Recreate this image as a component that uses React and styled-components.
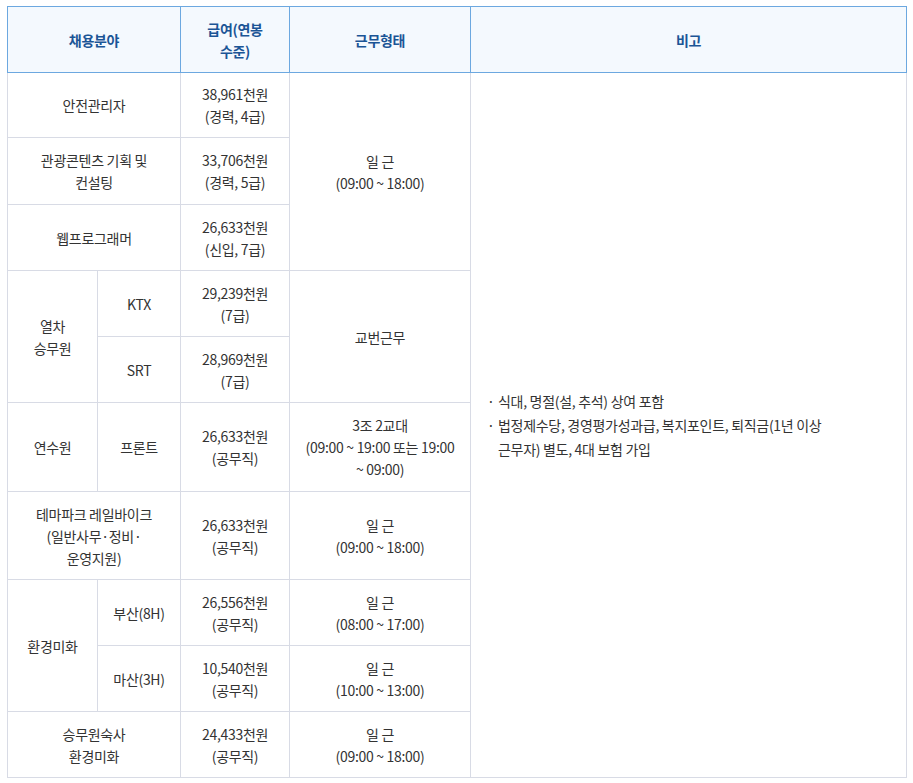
import React from 'react'
import styled, { createGlobalStyle } from 'styled-components'

const GlobalStyle = createGlobalStyle`
	body {
		margin: 0;
		background: #fff;
		font-family: 'Noto Sans CJK KR', 'Noto Sans', sans-serif;
	}
`

const jobs = [
	{ name: '안전관리자', pay: ['38,961천원', '(경력, 4급)'], h: 65 },
	{ name: ['관광콘텐츠 기획 및', '컨설팅'], pay: ['33,706천원', '(경력, 5급)'], h: 67 },
	{ name: '웹프로그래머', pay: ['26,633천원', '(신입, 7급)'], h: 66 },
]

const remarks = [
	'식대, 명절(설, 추석) 상여 포함',
	'법정제수당, 경영평가성과급, 복지포인트, 퇴직금(1년 이상 근무자) 별도, 4대 보험 가입',
]

const Lines = ({ lines }) =>
	[].concat(lines).map((l, i) => (
		<React.Fragment key={i}>
			{i > 0 && <br />}
			{l}
		</React.Fragment>
	))

const App = () => (
	<Page>
		<GlobalStyle />
		<Table>
			<colgroup>
				<col style={{ width: 90 }} />
				<col style={{ width: 83 }} />
				<col style={{ width: 109 }} />
				<col style={{ width: 181 }} />
				<col />
			</colgroup>
			<thead>
				<tr>
					<Th colSpan={2}>채용분야</Th>
					<Th>
						급여(연봉
						<br />
						수준)
					</Th>
					<Th>근무형태</Th>
					<Th>비고</Th>
				</tr>
			</thead>
			<tbody>
				{jobs.map((j, i) => (
					<Row key={i} $h={j.h}>
						<Td colSpan={2}>
							<Lines lines={j.name} />
						</Td>
						<Td>
							<Lines lines={j.pay} />
						</Td>
						{i === 0 && (
							<>
								<Td rowSpan={3}>
									일 근<br />
									(09:00 ~ 18:00)
								</Td>
								<Remarks rowSpan={10}>
									<RemarkList>
										{remarks.map(r => (
											<li key={r}>{r}</li>
										))}
									</RemarkList>
								</Remarks>
							</>
						)}
					</Row>
				))}
				<Row $h={66}>
					<Td rowSpan={2}>
						열차
						<br />
						승무원
					</Td>
					<Td>KTX</Td>
					<Td>
						29,239천원
						<br />
						(7급)
					</Td>
					<Td rowSpan={2}>교번근무</Td>
				</Row>
				<Row $h={66}>
					<Td>SRT</Td>
					<Td>
						28,969천원
						<br />
						(7급)
					</Td>
				</Row>
				<Row $h={89}>
					<Td>연수원</Td>
					<Td>프론트</Td>
					<Td>
						26,633천원
						<br />
						(공무직)
					</Td>
					<Td>
						3조 2교대
						<br />
						(09:00 ~ 19:00 또는 19:00
						<br />~ 09:00)
					</Td>
				</Row>
				<Row $h={88}>
					<Td colSpan={2}>
						테마파크 레일바이크
						<br />
						(일반사무·정비·
						<br />
						운영지원)
					</Td>
					<Td>
						26,633천원
						<br />
						(공무직)
					</Td>
					<Td>
						일 근<br />
						(09:00 ~ 18:00)
					</Td>
				</Row>
				<Row $h={66}>
					<Td rowSpan={2}>환경미화</Td>
					<Td>부산(8H)</Td>
					<Td>
						26,556천원
						<br />
						(공무직)
					</Td>
					<Td>
						일 근<br />
						(08:00 ~ 17:00)
					</Td>
				</Row>
				<Row $h={66}>
					<Td>마산(3H)</Td>
					<Td>
						10,540천원
						<br />
						(공무직)
					</Td>
					<Td>
						일 근<br />
						(10:00 ~ 13:00)
					</Td>
				</Row>
				<Row $h={66}>
					<Td colSpan={2}>
						승무원숙사
						<br />
						환경미화
					</Td>
					<Td>
						24,433천원
						<br />
						(공무직)
					</Td>
					<Td>
						일 근<br />
						(09:00 ~ 18:00)
					</Td>
				</Row>
			</tbody>
		</Table>
	</Page>
)

export default App

const Page = styled.div`
	padding: 6px 0 0 7px;
`

const Table = styled.table`
	width: 900px;
	border-collapse: collapse;
	table-layout: fixed;
	font-size: 14px;
	line-height: 22px;
	color: #333;
	letter-spacing: -0.3px;
`

const Th = styled.th`
	height: 66px;
	padding: 0 8px;
	box-sizing: border-box;
	background: #f4f9fe;
	border: 1px solid #6ca8e0;
	color: #1b5596;
	font-weight: 700;
	text-align: center;
	vertical-align: middle;
`

const Row = styled.tr`
	height: ${p => p.$h}px;
`

const Td = styled.td`
	padding: 0 6px;
	border: 1px solid #d8dbe5;
	text-align: center;
	vertical-align: middle;
	word-break: keep-all;
`

const Remarks = styled(Td)`
	text-align: left;
	padding: 0 50px 0 16px;
`

const RemarkList = styled.ul`
	list-style: none;
	margin: 0;
	padding: 0;
	line-height: 24px;

	li {
		position: relative;
		padding-left: 11px;
	}

	li::before {
		content: '·';
		position: absolute;
		left: 0;
		top: 0;
	}
`
